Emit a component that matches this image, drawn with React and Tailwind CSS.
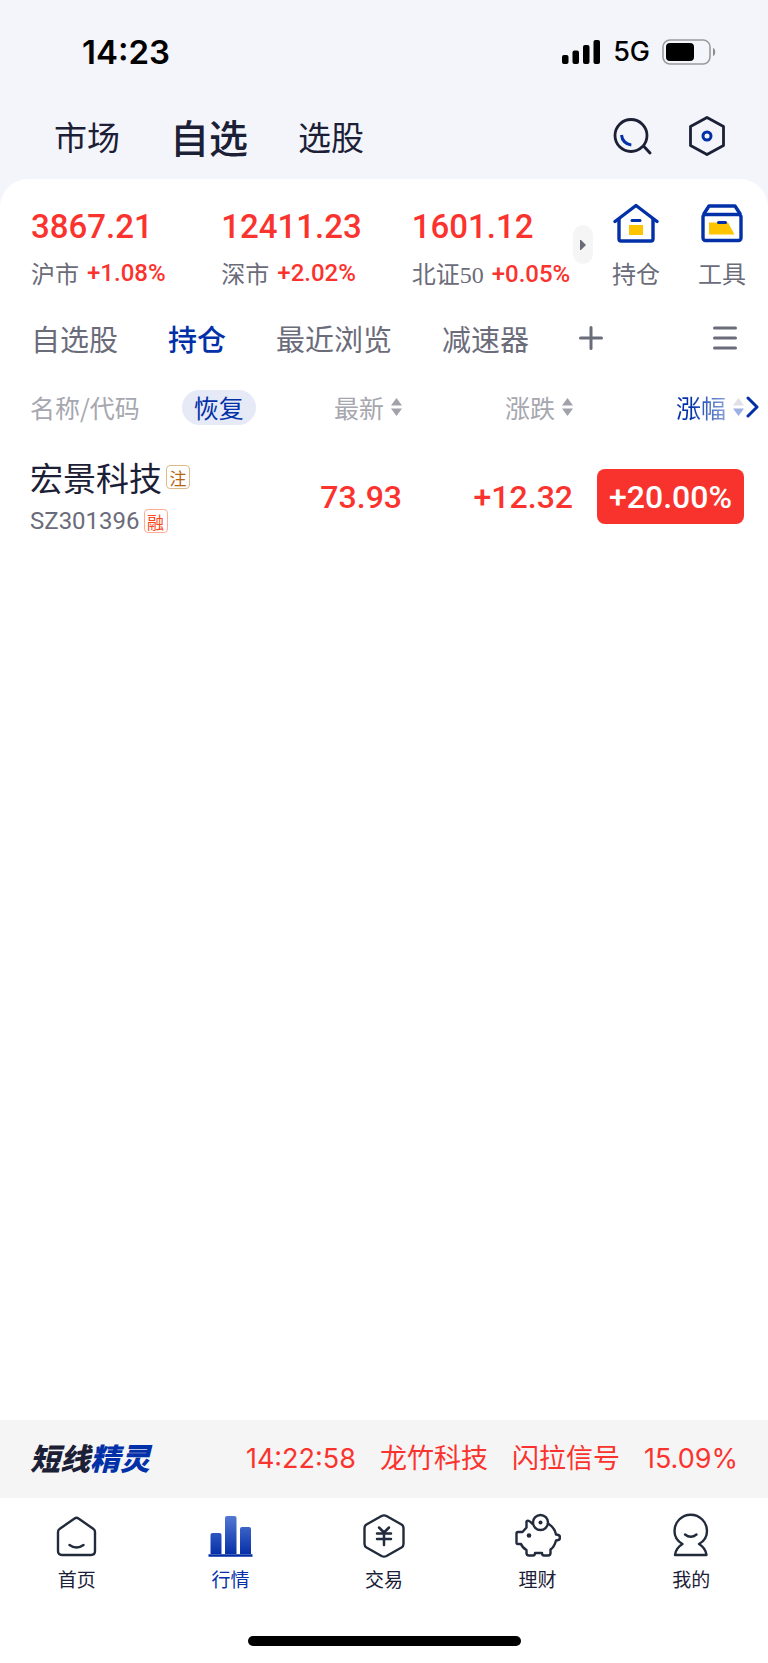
import React, { useState } from 'react';

const INDICES = [
  { name: '沪市', value: '3867.21', change: '+1.08%' },
  { name: '深市', value: '12411.23', change: '+2.02%' },
  { name: '北证', suffix: '50', value: '1601.12', change: '+0.05%' },
];

const STOCKS = [
  {
    name: '宏景科技',
    code: 'SZ301396',
    price: '73.93',
    change: '+12.32',
    percent: '+20.00%',
  },
];

const GROUPS = ['自选股', '持仓', '最近浏览', '减速器'];

const SignalIcon = () => (
  <svg width="39" height="25" viewBox="0 0 39 25" aria-hidden="true">
    <rect x="0" y="15" width="6.5" height="9" rx="2" />
    <rect x="10.5" y="10.5" width="6.5" height="13.5" rx="2" />
    <rect x="21" y="5" width="6.5" height="19" rx="2" />
    <rect x="31.5" y="0" width="6.5" height="24" rx="2" />
  </svg>
);

const BatteryIcon = () => (
  <svg width="54" height="26" viewBox="0 0 54 26" aria-hidden="true">
    <rect x="1" y="1" width="47" height="24" rx="7" fill="none" stroke="#9b9b9e" strokeWidth="1.6" />
    <rect x="4" y="4" width="28" height="18" rx="4" />
    <path d="M51 9c3 1 3 7 0 8z" fill="#8e8e92" />
  </svg>
);

const SearchIcon = () => (
  <svg width="40" height="42" viewBox="0 0 40 42" fill="none" aria-hidden="true">
    <circle cx="18" cy="20.5" r="16" stroke="#1c2036" strokeWidth="2.8" />
    <path d="M30.500 31l6.500 7" stroke="#1c2036" strokeWidth="3" strokeLinecap="round" />
    <path d="M8.500 20c.5 5.500 4.500 9.500 9.800 10" stroke="#0230a8" strokeWidth="3" />
  </svg>
);

const SettingsIcon = () => (
  <svg width="36" height="42" viewBox="0 0 36 42" fill="none" aria-hidden="true">
    <path d="M18 2.500L34.500 11.500v19L18 39.500 1.500 30.500v-19z" stroke="#1c2036" strokeWidth="2.8" strokeLinejoin="round" />
    <circle cx="18" cy="21" r="4" stroke="#0230a8" strokeWidth="3" />
  </svg>
);

const HoldingIcon = () => (
  <svg width="46" height="40" viewBox="0 0 46 40" fill="none" aria-hidden="true">
    <path d="M2 18.500L23 2.500l21 16" stroke="#0230a8" strokeWidth="3.4" strokeLinecap="round" strokeLinejoin="round" />
    <path d="M6 16v20q0 2 2 2h30q2 0 2-2V16" stroke="#0230a8" strokeWidth="3.4" />
    <rect x="16" y="22" width="14" height="10" fill="#ffc400" />
    <path d="M19 17.500h8" stroke="#0230a8" strokeWidth="3" strokeLinecap="round" />
  </svg>
);

const ToolboxIcon = () => (
  <svg width="42" height="40" viewBox="0 0 42 40" fill="none" aria-hidden="true">
    <path d="M2.500 11.500L8 3h26l5.500 8.500" stroke="#0230a8" strokeWidth="3.4" strokeLinejoin="round" />
    <rect x="2" y="11.500" width="38" height="26" rx="2.500" stroke="#0230a8" strokeWidth="3.4" />
    <path d="M8 19.500h19l6.500 12H8z" fill="#ffc400" />
    <path d="M17.500 19.500h7" stroke="#0230a8" strokeWidth="3" strokeLinecap="round" />
  </svg>
);

const SortIcon = ({ up = '#a0a1a9', down = '#a0a1a9' }) => (
  <svg width="11" height="18" viewBox="0 0 11 18" aria-hidden="true">
    <path d="M5.500 0L11 7.500H0z" fill={up} />
    <path d="M5.500 18L0 10.500h11z" fill={down} />
  </svg>
);

const HomeIcon = () => (
  <path
    d="M20.500 5.500q2-1.500 4 0l15 10.500q1.500 1 1.500 3v19q0 4-4 4H8q-4 0-4-4V19q0-2 1.500-3zM15.500 32q7 5 14 0"
    stroke="#222b3b"
    strokeWidth="2.400"
    strokeLinecap="round"
    strokeLinejoin="round"
  />
);

const MarketIcon = () => (
  <>
    <defs>
      <linearGradient id="bars" x1="0" y1="3" x2="0" y2="43" gradientUnits="userSpaceOnUse">
        <stop offset="0" stopColor="#5378d3" />
        <stop offset="1" stopColor="#022ca6" />
      </linearGradient>
    </defs>
    <g fill="url(#bars)">
      <path d="M3.500 41V22q0-2 2-2h7q2 0 2 2v19z" />
      <path d="M18 41V5q0-2 2-2h7.500q2 0 2 2v36z" />
      <path d="M33 41V16q0-2 2-2h7q2 0 2 2v25z" />
    </g>
    <path d="M1.500 42.500h44" stroke="#022ca6" strokeWidth="2.500" />
  </>
);

const TradeIcon = () => (
  <g stroke="#222b3b" strokeWidth="2.400" strokeLinecap="round" strokeLinejoin="round">
    <path d="M20.500 3q2.500-1.300 5 0l15 8.500q2 1.200 2 3.500v16q0 2.300-2 3.500l-15 8.500q-2.500 1.300-5 0l-15-8.500q-2-1.200-2-3.500V15q0-2.300 2-3.500z" />
    <path d="M18 14.500l5 5 5-5M16 20.500h14M16 26h14M23 20v12" strokeWidth="2.500" />
  </g>
);

const WealthIcon = () => (
  <>
    <g stroke="#222b3b" strokeWidth="2.400" strokeLinejoin="round" strokeLinecap="round">
      <path d="M17 10.500c-2-3-5-3.500-5.500-2v6l-4 4.500H3q-1.500 0-1.500 1.500v9q0 1.500 1.500 1.500h3c1 3 3 4.500 5.500 6v3q0 2.500 2.500 2.500h4q2 0 2-2.500h7q0 2.500 2 2.500h4q2.500 0 2.500-2.500v-3.500c3-2 4.500-5 5.500-9q4 0 4-3t-4-3c-1-5-4-8.500-8-11" />
      <circle cx="25.500" cy="9.500" r="7.500" />
    </g>
    <circle cx="25.500" cy="9.500" r="2" fill="#222b3b" />
    <circle cx="14" cy="22.500" r="2.300" fill="#222b3b" />
  </>
);

const MineIcon = () => (
  <g stroke="#222b3b" strokeWidth="2.400" strokeLinecap="round" strokeLinejoin="round">
    <path d="M14.500 31C9 28 6.500 23 6.500 18a16.200 16.200 0 0 1 32.500 0c0 5-2.500 10-8 13 5 3 7 6.500 7.500 11H7c.5-4.500 2.500-8 7.500-11z" />
    <path d="M17 21.500q5.800 4.500 11.500 0" />
  </g>
);

const NAV_ITEMS = [
  { label: '首页', Icon: HomeIcon },
  { label: '行情', Icon: MarketIcon },
  { label: '交易', Icon: TradeIcon },
  { label: '理财', Icon: WealthIcon },
  { label: '我的', Icon: MineIcon },
];

const StatusBar = () => (
  <div className="flex h-[102px] items-center justify-between pt-[2px] pr-[52px] pl-[82px] font-['Inter',sans-serif] text-black">
    <span className="text-[33px] leading-10 font-semibold">14:23</span>
    <div className="flex items-center">
      <SignalIcon />
      <span className="ml-3 text-[27px] leading-10 font-medium">5G</span>
      <span className="ml-3">
        <BatteryIcon />
      </span>
    </div>
  </div>
);

const TopBar = () => (
  <header className="flex h-[77px] items-center justify-between pr-[43px] pb-[10px] pl-[54px] text-[#1c2036]">
    <nav className="flex items-center gap-[50px] text-[33px] leading-10">
      <button type="button">市场</button>
      <button type="button" className="text-[39px] font-medium">自选</button>
      <button type="button">选股</button>
    </nav>
    <div className="flex items-center gap-9">
      <button type="button" aria-label="搜索"><SearchIcon /></button>
      <button type="button" aria-label="设置"><SettingsIcon /></button>
    </div>
  </header>
);

const IndexBar = () => (
  <section className="flex items-start pt-[30px] pr-[22px] pl-[31px]">
    <div className="grid flex-1 grid-cols-[190fr_190fr_161fr]">
      {INDICES.map((item) => (
        <div key={item.name} className="whitespace-nowrap">
          <div className="font-['Roboto',sans-serif] text-[33px] leading-9 font-medium text-[#fb332e]">
            {item.value}
          </div>
          <div className="mt-3 flex items-center gap-2 leading-8">
            <span className="text-[24px] text-[#6b6c7a]">
              {item.name}
              {item.suffix && (
                <span className="font-['Liberation_Serif',serif]">{item.suffix}</span>
              )}
            </span>
            <span className="font-['Roboto',sans-serif] text-[24px] font-medium text-[#fb332e]">
              {item.change}
            </span>
          </div>
        </div>
      ))}
    </div>
    <button
      type="button"
      aria-label="更多指数"
      className="mt-4 flex h-[39px] w-5 items-center justify-center rounded-full bg-[#f5f5f5]"
    >
      <svg width="6" height="10" viewBox="0 0 6 10" aria-hidden="true">
        <path d="M0 0h1l5 5-5 5H0z" fill="#6b6c7a" />
      </svg>
    </button>
    <div className="-mt-[6px] ml-[19px] flex gap-[38px] text-[24px] leading-8 text-[#6b6c7a]">
      <button type="button" className="flex flex-col items-center gap-[14px]">
        <HoldingIcon />
        持仓
      </button>
      <button type="button" className="flex flex-col items-center gap-[14px]">
        <ToolboxIcon />
        工具
      </button>
    </div>
  </section>
);

const GroupTabs = ({ active, onSelect }) => (
  <div className="mt-[17px] flex h-[60px] items-center justify-between pr-[31px] pl-[31px] text-[#6b6c7a]">
    <div className="flex items-center gap-[50px] text-[29px] leading-10">
      {GROUPS.map((group) => (
        <button
          key={group}
          type="button"
          onClick={() => onSelect(group)}
          className={active === group ? 'font-medium text-[#0230a8]' : ''}
        >
          {group}
        </button>
      ))}
      <button type="button" aria-label="添加分组">
        <svg width="24" height="24" viewBox="0 0 24 24" aria-hidden="true">
          <path d="M12 1.500v21M1.500 12h21" stroke="#6b6c7a" strokeWidth="3" strokeLinecap="round" />
        </svg>
      </button>
    </div>
    <button type="button" aria-label="菜单">
      <svg width="24" height="24" viewBox="0 0 24 24" aria-hidden="true">
        <path d="M1.500 2h21M1.500 12h21M1.500 22h21" stroke="#6b6c7a" strokeWidth="3" strokeLinecap="round" />
      </svg>
    </button>
  </div>
);

const StockTable = () => (
  <table className="w-full table-fixed whitespace-nowrap">
    <thead className="text-[25px] leading-[35px] text-[#a6a7af]">
      <tr className="h-[78px]">
        <th className="pl-[30px] text-left font-normal">
          <div className="flex items-center gap-[42px]">
            <span>名称/代码</span>
            <button type="button" className="rounded-full bg-[#e5eaf6] px-3 text-[#0230a8]">
              恢复
            </button>
          </div>
        </th>
        <th className="w-[140px] font-normal">
          <button type="button" className="ml-auto flex items-center gap-[7px]">
            最新
            <SortIcon />
          </button>
        </th>
        <th className="w-[171px] font-normal">
          <button type="button" className="ml-auto flex items-center gap-[7px]">
            涨跌
            <SortIcon />
          </button>
        </th>
        <th className="w-[195px] pr-[9px] font-normal">
          <button type="button" className="ml-auto flex items-center">
            <span className="bg-linear-to-r from-[#0230a8] from-30% to-[#8a9fdc] bg-clip-text text-transparent">
              涨幅
            </span>
            <span className="mr-[2px] ml-[7px]">
              <SortIcon up="#dfe0e4" down="#9db0e2" />
            </span>
            <svg width="13" height="22" viewBox="0 0 13 22" fill="none" aria-hidden="true">
              <path d="M2 2l9 9-9 9" stroke="#0230a8" strokeWidth="3" strokeLinecap="round" strokeLinejoin="round" />
            </svg>
          </button>
        </th>
      </tr>
    </thead>
    <tbody>
      {STOCKS.map((stock) => (
        <tr
          key={stock.code}
          className="text-right font-['Roboto',sans-serif] text-[32px] leading-10 font-medium text-[#fb332e]"
        >
          <td className="pt-[11px] pb-2 pl-[30px] text-left font-['Noto_Sans_CJK_SC',sans-serif] font-normal">
            <div className="flex items-center gap-1 text-[33px] text-[#1c2036]">
              {stock.name}
              <span className="flex size-6 items-center justify-center rounded-sm border border-[#dfb98a] text-[17px] leading-none text-[#b8650f]">
                注
              </span>
            </div>
            <div className="mt-[6px] flex items-center gap-1 leading-9">
              <span className="font-['Roboto',sans-serif] text-[24px] text-[#6b6c7a]">{stock.code}</span>
              <span className="flex size-6 items-center justify-center rounded-sm border border-[#ffab96] text-[17px] leading-none text-[#f9471c]">
                融
              </span>
            </div>
          </td>
          <td>{stock.price}</td>
          <td>{stock.change}</td>
          <td className="pr-6">
            <span className="ml-auto flex h-[55px] w-[147px] items-center justify-center rounded-lg bg-[#f8332d] text-white">
              {stock.percent}
            </span>
          </td>
        </tr>
      ))}
    </tbody>
  </table>
);

const SignalTicker = () => (
  <div className="flex h-[78px] items-center justify-between bg-[#f5f5f5] pr-[30px] pl-[30px]">
    <span className="pb-[5px] text-[30px] leading-9 font-black text-[#1c2036] italic">
      短线<span className="text-[#0230a8]">精灵</span>
    </span>
    <a href="#signal" className="flex items-center gap-6 font-['Inter','Noto_Sans_CJK_SC',sans-serif] text-[27px] leading-9 text-[#fb332e]">
      <span>14:22:58</span>
      <span>龙竹科技</span>
      <span>闪拉信号</span>
      <span>15.09%</span>
    </a>
  </div>
);

const BottomNav = ({ active, onSelect }) => (
  <nav className="grid grid-cols-5 pt-[15px] text-[19px] leading-7 text-[#1c2036]">
    {NAV_ITEMS.map(({ label, Icon }) => (
      <button
        key={label}
        type="button"
        onClick={() => onSelect(label)}
        className={`flex flex-col items-center gap-[6px] ${active === label ? 'text-[#0230a8]' : ''}`}
      >
        <svg width="46" height="46" viewBox="0 0 46 46" fill="none" aria-hidden="true">
          <Icon />
        </svg>
        {label}
      </button>
    ))}
  </nav>
);

const App = () => {
  const [group, setGroup] = useState('持仓');
  const [page, setPage] = useState('行情');

  return (
    <div className="flex min-h-screen flex-col bg-[#f4f5fa] font-['Noto_Sans_CJK_SC',sans-serif]">
      <StatusBar />
      <TopBar />
      <main className="flex-1 rounded-t-[28px] bg-white">
        <IndexBar />
        <GroupTabs active={group} onSelect={setGroup} />
        <StockTable />
      </main>
      <SignalTicker />
      <footer className="bg-white">
        <BottomNav active={page} onSelect={setPage} />
        <div className="mx-auto mt-[43px] mb-[17px] h-[10px] w-[273px] rounded-full bg-black" />
      </footer>
    </div>
  );
};

export default App;
